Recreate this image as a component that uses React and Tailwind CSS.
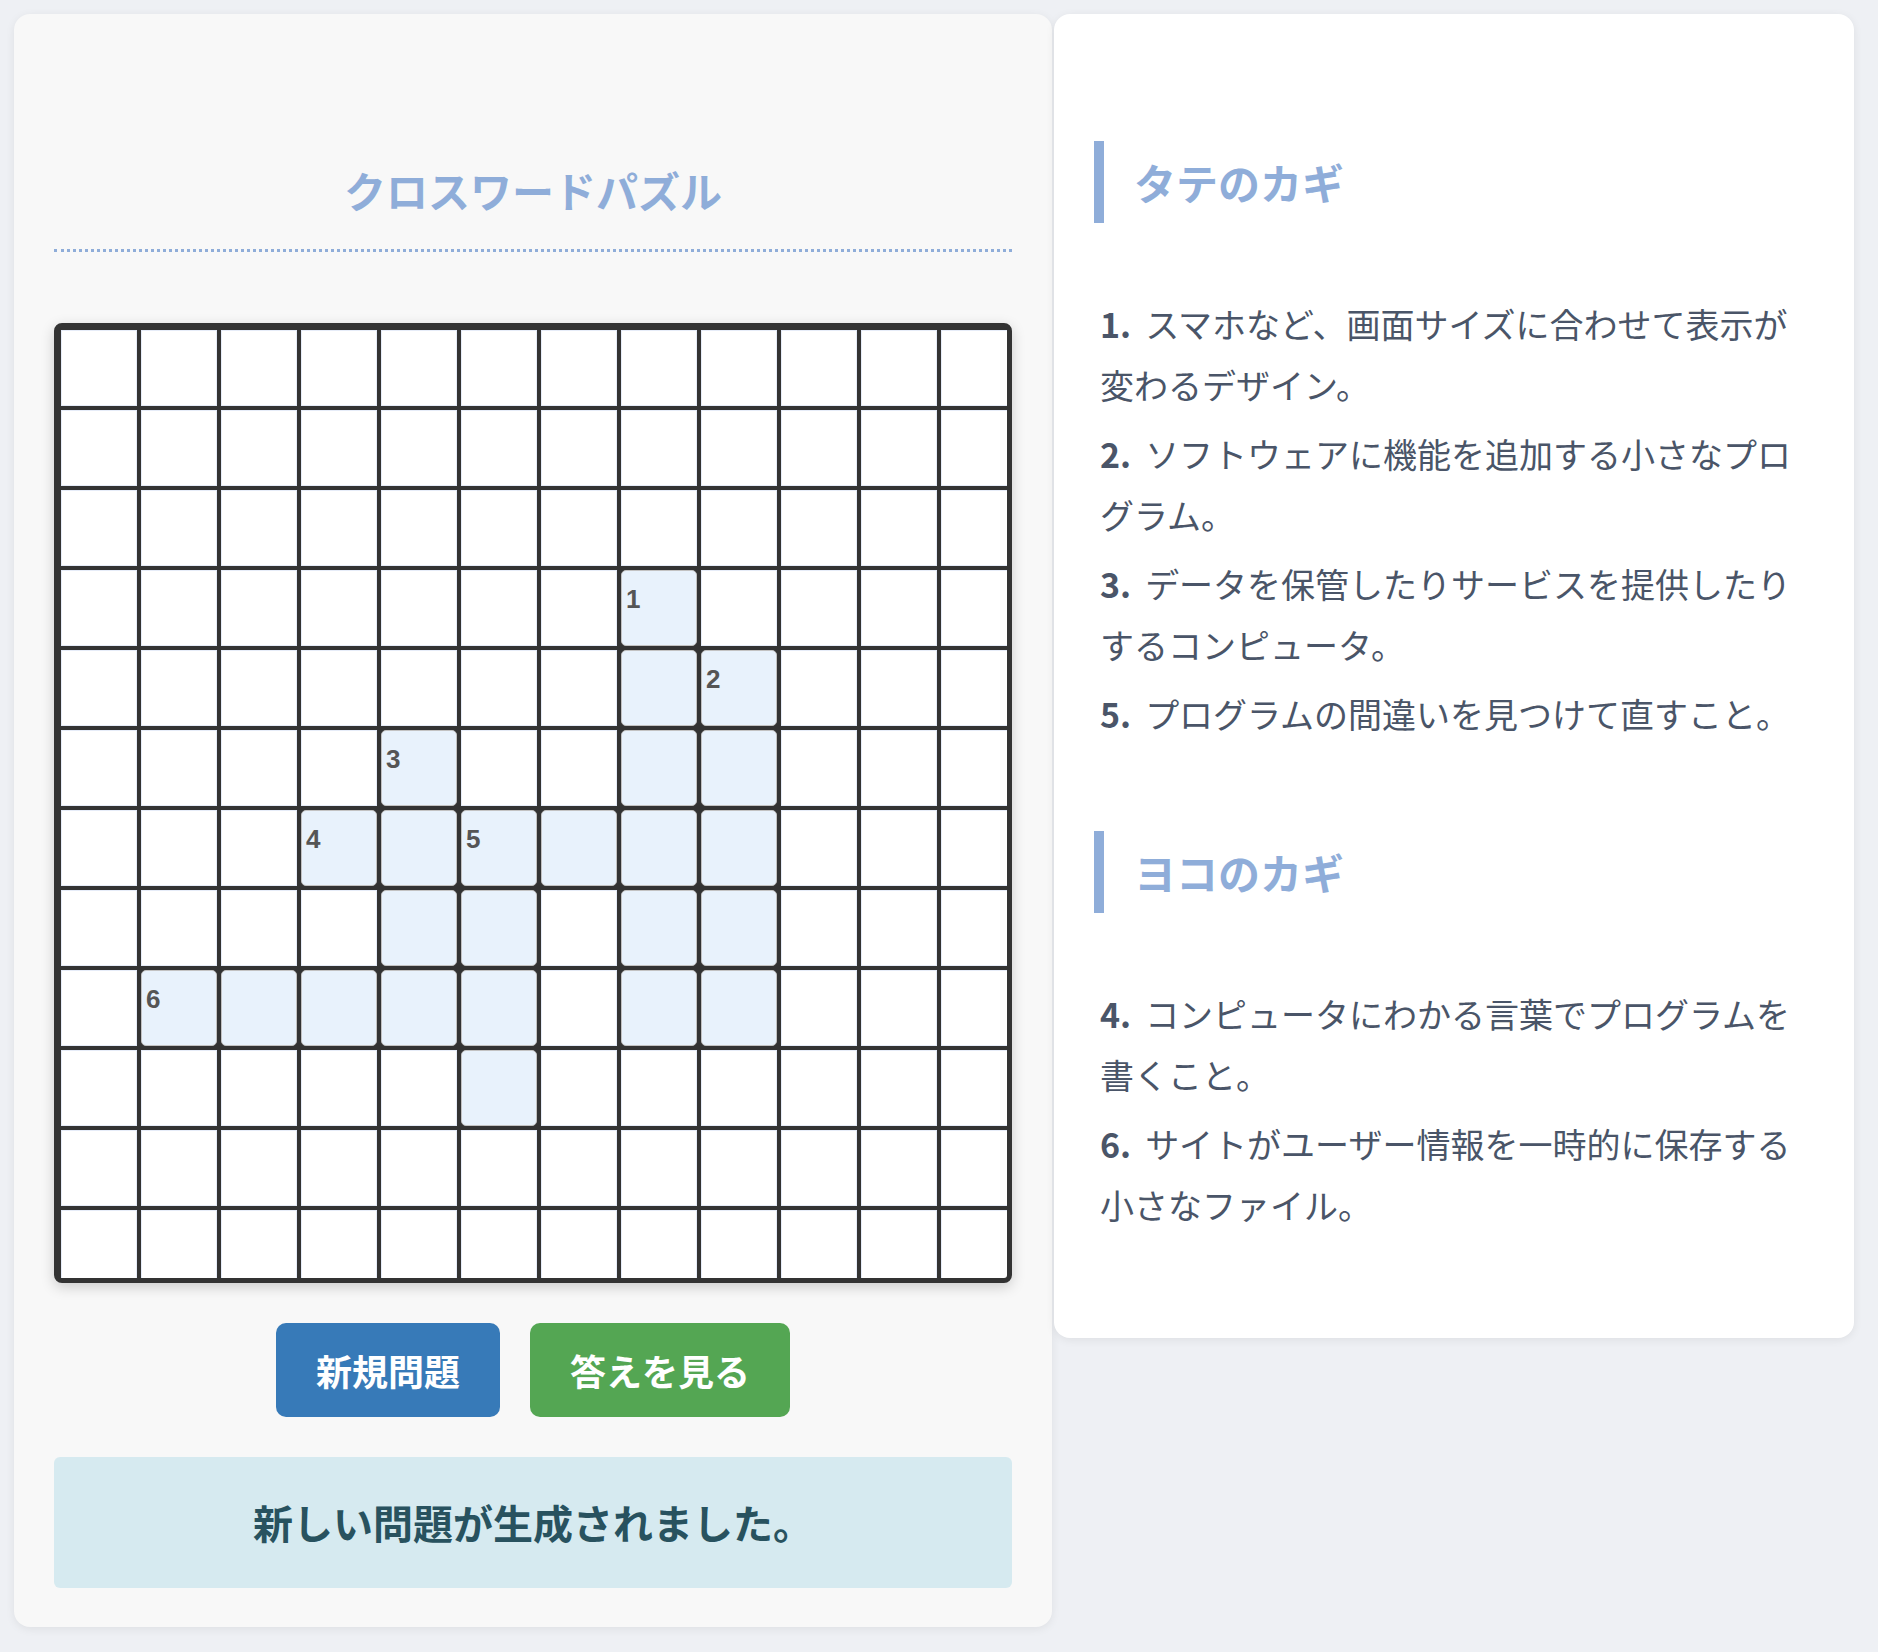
import React from 'react';

// 12x12 grid; active cells hold the answer slots, numbers mark clue starts
const ACTIVE = {
  3: [7],
  4: [7, 8],
  5: [4, 7, 8],
  6: [3, 4, 5, 6, 7, 8],
  7: [4, 5, 7, 8],
  8: [1, 2, 3, 4, 5, 7, 8],
  9: [5],
};

const NUMBERS = {
  '3-7': 1,
  '4-8': 2,
  '5-4': 3,
  '6-3': 4,
  '6-5': 5,
  '8-1': 6,
};

const DOWN = [
  { n: 1, lines: ['スマホなど、画面サイズに合わせて表示が', '変わるデザイン。'] },
  { n: 2, lines: ['ソフトウェアに機能を追加する小さなプロ', 'グラム。'] },
  { n: 3, lines: ['データを保管したりサービスを提供したり', 'するコンピュータ。'] },
  { n: 5, lines: ['プログラムの間違いを見つけて直すこと。'] },
];

const ACROSS = [
  { n: 4, lines: ['コンピュータにわかる言葉でプログラムを', '書くこと。'] },
  { n: 6, lines: ['サイトがユーザー情報を一時的に保存する', '小さなファイル。'] },
];

const Cell = ({ row, col }) => {
  const active = (ACTIVE[row] || []).includes(col);
  const num = NUMBERS[`${row}-${col}`];

  if (!active) {
    return <div className="border border-[#e6ecf8] bg-white" />;
  }

  return (
    <div className="relative rounded-[5px] border border-[#c2c2c2] bg-[#e8f2fc]">
      {num && (
        <span className="absolute left-[4px] top-[15px] font-['Liberation_Sans',sans-serif] text-[26px] font-bold leading-none text-[#555]">
          {num}
        </span>
      )}
    </div>
  );
};

const ClueSection = ({ title, clues }) => (
  <section>
    <h2 className="mt-[87px] border-l-[10px] border-[#8fadd9] py-[10px] pl-[30px] text-[42px] font-bold leading-[62px] text-[#8fadd9]">
      {title}
    </h2>
    <ul className="mt-[70px] flex flex-col gap-[8px] pl-[6px] text-[34px] leading-[61px] text-[#4a5568]">
      {clues.map((c) => (
        <li key={c.n}>
          <span className="mr-[14px] font-bold">{c.n}.</span>
          {c.lines.map((line, i) => (
            <React.Fragment key={i}>
              {i > 0 && <br />}
              {line}
            </React.Fragment>
          ))}
        </li>
      ))}
    </ul>
  </section>
);

export default function App() {
  const rows = Array.from({ length: 12 }, (_, i) => i);

  return (
    <div className="min-h-screen bg-[#eef0f4] font-['Noto_Sans_CJK_JP','Liberation_Sans',sans-serif]">
      <div className="flex items-start gap-[2px] pl-[14px] pt-[14px]">
        {/* パズル本体 */}
        <main className="w-[1038px] rounded-[16px] bg-[#f8f8f8] px-[40px] pb-[39px] pt-[40px] shadow-[0_2px_10px_rgba(0,0,0,0.07)]">
          <h1 className="mt-[104px] border-b-[3px] border-dotted border-[#8fadd9] pb-[28px] text-center text-[42px] font-bold leading-[63px] text-[#8fadd9]">
            クロスワードパズル
          </h1>

          <div className="mt-[71px] h-[960px] w-full overflow-hidden rounded-[8px] border-[5px] border-[#333] bg-[#333] p-[2px] shadow-[0_4px_14px_rgba(0,0,0,0.18)]">
            <div className="grid grid-cols-[repeat(12,76px)] grid-rows-[repeat(12,76px)] gap-[4px]">
              {rows.map((r) => rows.map((c) => <Cell key={`${r}-${c}`} row={r} col={c} />))}
            </div>
          </div>

          <div className="mt-[40px] flex justify-center gap-[30px]">
            <button className="rounded-[10px] bg-[#377ab8] px-[40px] py-[20px] text-[36px] font-bold leading-[54px] text-white">
              新規問題
            </button>
            <button className="rounded-[10px] bg-[#54a653] px-[40px] py-[20px] text-[36px] font-bold leading-[54px] text-white">
              答えを見る
            </button>
          </div>

          <div className="mt-[40px] rounded-[6px] bg-[#d6eaf0] py-[35px] text-center text-[40px] font-bold leading-[61px] text-[#28525f]">
            新しい問題が生成されました。
          </div>
        </main>

        {/* カギ一覧 */}
        <aside className="w-[800px] rounded-[16px] bg-white px-[40px] pb-[103px] pt-[40px] shadow-[0_2px_10px_rgba(0,0,0,0.07)]">
          <ClueSection title="タテのカギ" clues={DOWN} />
          <ClueSection title="ヨコのカギ" clues={ACROSS} />
        </aside>
      </div>
    </div>
  );
}
